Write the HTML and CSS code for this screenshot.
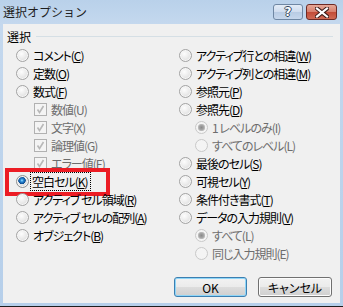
FILE: index.html
```html
<!DOCTYPE html>
<html lang="ja">
<head>
    <meta charset="UTF-8">
    <title>選択オプション</title>
    <link rel="stylesheet" href="styles.css">
</head>
<body>
    <div class="window">
        <div class="titlebar">
            <div class="title">選択オプション</div>
            <div class="caption-buttons">
                <div class="cap-btn help"><span>?</span></div>
                <div class="cap-btn close">
                    <svg width="14" height="11" viewBox="0 0 14 11">
                        <path d="M2 1.5 L12 9.5 M12 1.5 L2 9.5" stroke="#3a1a16" stroke-width="4.2" stroke-linecap="square"/>
                        <path d="M2 1.5 L12 9.5 M12 1.5 L2 9.5" stroke="#fff" stroke-width="2.2" stroke-linecap="square"/>
                    </svg>
                </div>
            </div>
        </div>

        <div class="client">
            <div class="legend">
                <span>選択</span>
                <span class="legend-line"></span>
            </div>

            <div class="options">
                <div class="col">
                    <div class="opt"><span class="radio"></span><span>コメント(<u>C</u>)</span></div>
                    <div class="opt"><span class="radio"></span><span>定数(<u>O</u>)</span></div>
                    <div class="opt"><span class="radio"></span><span>数式(<u>F</u>)</span></div>
                    <div class="opt sub disabled"><span class="check"></span><span>数値(U)</span></div>
                    <div class="opt sub disabled"><span class="check"></span><span>文字(X)</span></div>
                    <div class="opt sub disabled"><span class="check"></span><span>論理値(G)</span></div>
                    <div class="opt sub disabled"><span class="check"></span><span>エラー値(E)</span></div>
                    <div class="opt marked">
                        <span class="radio on"></span><span class="focus">空白セル(<u>K</u>)</span>
                        <span class="highlight"></span>
                    </div>
                    <div class="opt"><span class="radio"></span><span>アクティブ セル領域(<u>R</u>)</span></div>
                    <div class="opt"><span class="radio"></span><span>アクティブ セルの配列(<u>A</u>)</span></div>
                    <div class="opt"><span class="radio"></span><span>オブジェクト(<u>B</u>)</span></div>
                </div>
                <div class="col">
                    <div class="opt"><span class="radio"></span><span>アクティブ行との相違(<u>W</u>)</span></div>
                    <div class="opt"><span class="radio"></span><span>アクティブ列との相違(<u>M</u>)</span></div>
                    <div class="opt"><span class="radio"></span><span>参照元(<u>P</u>)</span></div>
                    <div class="opt"><span class="radio"></span><span>参照先(<u>D</u>)</span></div>
                    <div class="opt sub disabled"><span class="radio on"></span><span>1 レベルのみ(I)</span></div>
                    <div class="opt sub disabled"><span class="radio"></span><span>すべてのレベル(L)</span></div>
                    <div class="opt"><span class="radio"></span><span>最後のセル(<u>S</u>)</span></div>
                    <div class="opt"><span class="radio"></span><span>可視セル(<u>Y</u>)</span></div>
                    <div class="opt"><span class="radio"></span><span>条件付き書式(<u>T</u>)</span></div>
                    <div class="opt"><span class="radio"></span><span>データの入力規則(<u>V</u>)</span></div>
                    <div class="opt sub disabled"><span class="radio on"></span><span>すべて(L)</span></div>
                    <div class="opt sub disabled"><span class="radio"></span><span>同じ入力規則(E)</span></div>
                </div>
            </div>

            <div class="actions">
                <button class="btn default">OK</button>
                <button class="btn">キャンセル</button>
            </div>
        </div>
    </div>
</body>
</html>
```

FILE: styles.css
```css
* {
    box-sizing: border-box;
}

body {
    margin: 0;
    font-family: "Noto Sans CJK JP", "Noto Sans", sans-serif;
    font-size: 12px;
    color: #000;
}

/* Window frame */
.window {
    width: 343px;
    height: 307px;
    display: flex;
    flex-direction: column;
    padding: 0 3px 3px 3px;
    background: linear-gradient(#b9d1ea, #c4d8ee 24px, #b6cfea);
    border-bottom: 1px solid #1e1e1e;
}

.titlebar {
    height: 24px;
    display: flex;
    align-items: flex-start;
}

.title {
    line-height: 24px;
    font-size: 12px;
    color: #1e1e1e;
}

.caption-buttons {
    margin-left: auto;
    margin-top: 4px;
    margin-right: 3px;
    display: flex;
    gap: 3px;
}

.cap-btn {
    height: 16px;
    border-radius: 3px;
    display: flex;
    justify-content: center;
    align-items: center;
}

.help {
    width: 30px;
    border: 1px solid #6f87a3;
    background: linear-gradient(#e3ecf7, #cfdcee 50%, #b8cbe3 50%, #c6d7ec);
}

.help span {
    font-family: "DejaVu Sans", sans-serif;
    font-weight: bold;
    font-size: 12px;
    line-height: 12px;
    color: #fff;
    text-shadow: -1px 0 #35465c, 1px 0 #35465c, 0 -1px #35465c, 0 1px #35465c;
}

.close {
    width: 31px;
    border: 1px solid #6e2a24;
    background: linear-gradient(#e6a897, #d77e6c 50%, #c24a36 50%, #cf6a55);
}

/* Client area */
.client {
    flex: 1;
    background: #f0f0f0;
    padding: 5px 8px 0 4px;
    display: flex;
    flex-direction: column;
}

.legend {
    height: 14px;
    display: flex;
    align-items: center;
    gap: 5px;
}

.legend-line {
    flex: 1;
    height: 1px;
    margin-right: -1px;
    background: #d5dfe5;
}

.options {
    margin-top: 3px;
    margin-left: 9px;
    display: grid;
    grid-template-columns: 163px 1fr;
}

.opt {
    position: relative;
    height: 18px;
    display: flex;
    align-items: center;
    gap: 4px;
    white-space: nowrap;
    font-size: 12px;
    letter-spacing: -1px;
    font-feature-settings: "palt";
}

.opt.sub {
    padding-left: 16px;
}

.col:first-child .opt.sub {
    padding-left: 18px;
}

.disabled {
    color: #6d6d6d;
}

/* Radio buttons */
.radio {
    width: 13px;
    height: 13px;
    flex: none;
    border-radius: 50%;
    border: 1px solid #a3a3a3;
    background: radial-gradient(circle at 40% 35%, #fdfdfd 0, #ececec 45%, #d4d4d4 100%);
    box-shadow: inset 0 0 0 1px #f6f6f6;
}

.radio.on {
    border-color: #8e8f8f;
    background:
        radial-gradient(circle at 45% 40%, #9fe4ff 0, #2a8ad8 1.5px, #0c4a8e 3.5px, transparent 4px),
        radial-gradient(circle at 40% 35%, #fdfdfd 0, #e6e6e6 45%, #cacaca 100%);
}

.disabled .radio {
    border-color: #c9c9c9;
    background: #f4f4f4;
    box-shadow: none;
}

.disabled .radio.on {
    background:
        radial-gradient(circle, #8a8a8a 0, #a8a8a8 2.5px, #c6c6c6 3.5px, transparent 4px),
        #f4f4f4;
}

/* Checkboxes (disabled, checked) */
.check {
    width: 13px;
    height: 13px;
    flex: none;
    border: 1px solid #b1b1b1;
    background: #f4f4f4 url("data:image/svg+xml,%3Csvg xmlns='http://www.w3.org/2000/svg' width='11' height='11'%3E%3Cpath d='M2.5 5.5 L4.5 8.5 L8.5 2' fill='none' stroke='%23b8b8b8' stroke-width='1.6'/%3E%3C/svg%3E") no-repeat center;
}

/* Selected item */
.focus {
    outline: 1px dotted #000;
    padding: 0 2px 0 1px;
    margin-left: -2px;
}

.highlight {
    position: absolute;
    left: -11px;
    top: -4px;
    width: 105px;
    height: 28px;
    border: 4px solid #ec1c24;
}

/* Buttons */
.actions {
    margin-top: auto;
    margin-bottom: 6px;
    display: flex;
    justify-content: flex-end;
    gap: 11px;
}

.btn {
    width: 74px;
    height: 20px;
    padding: 0;
    font-family: inherit;
    font-size: 12px;
    font-feature-settings: "palt";
    color: #000;
    border: 1px solid #707070;
    border-radius: 3px;
    background: linear-gradient(#f2f2f2, #ebebeb 50%, #dddddd 50%, #cfcfcf);
    box-shadow: inset 0 0 0 1px #fcfcfc;
}

.btn.default {
    width: 73px;
    border-color: #3c7fb1;
    box-shadow: inset 0 0 0 1px #8fd6f8;
}
```
